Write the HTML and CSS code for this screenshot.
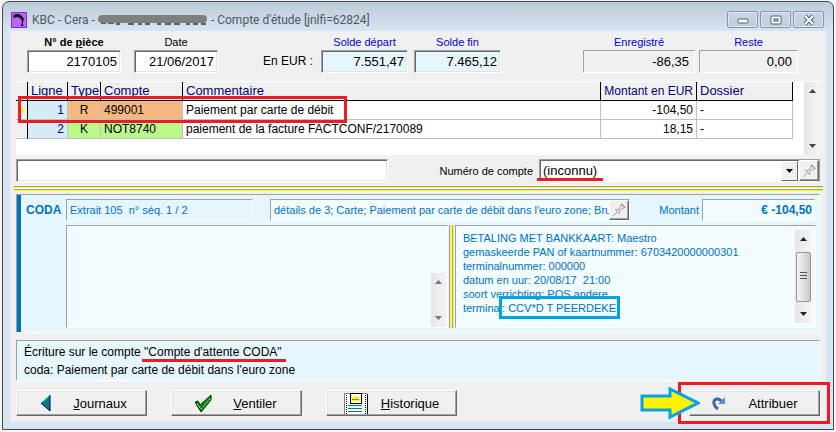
FILE: index.html
```
<!DOCTYPE html>
<html lang="fr">
<head>
    <meta charset="UTF-8">
    <meta name="viewport" content="width=device-width, initial-scale=1.0">
    <title>Compte d'étude</title>
    <link rel="stylesheet" href="styles.css">
</head>
<body>
    <div class="window">
        <header class="titlebar">
            <svg class="app-icon" width="16" height="16" viewBox="0 0 16 16">
                <rect width="16" height="16" fill="#8a2be2"/>
                <rect x="1" y="1" width="14" height="14" fill="#b768f2"/>
                <path d="M2 4l2-2h4l3 2 2 3-1 3v3l1 1h-3l1-4-1-3-3-2-4 1z" fill="#1c0a2c"/>
            </svg>
            <h1>KBC - Cera -</h1>
            <svg class="masked" width="112" height="14" viewBox="0 0 112 14">
                <path d="M4 10h5m2 0h6m2 1h4m8 0h6m4 0h4m3 0h5m7 0h4m4 0h6m3 0h6m6 0h4m3 0h5m3 0h5" stroke="#56616d" stroke-width="2"/>
                <path d="M5 6h101" stroke="#7f7f7f" stroke-width="8" stroke-linecap="round"/>
            </svg>
            <h1>- Compte d'étude [jnlfi=62824]</h1>
            <div class="window-buttons">
                <button type="button" aria-label="Réduire"><svg width="12" height="12" viewBox="0 0 12 12"><rect x="1" y="5" width="10" height="4" rx="1" fill="#fff" stroke="#56606c"/></svg></button>
                <button type="button" aria-label="Agrandir"><svg width="12" height="12" viewBox="0 0 12 12"><rect x="1" y="2" width="10" height="8" rx="1" fill="#fff" stroke="#56606c"/><rect x="4" y="5" width="4" height="2" fill="#b9c8d6" stroke="#56606c"/></svg></button>
                <button type="button" aria-label="Fermer"><svg width="12" height="12" viewBox="0 0 12 12"><path d="M2 2l8 8M10 2l-8 8" stroke="#56606c" stroke-width="4"/><path d="M2 2l8 8M10 2l-8 8" stroke="#fff" stroke-width="2"/></svg></button>
            </div>
        </header>

        <main class="content">
            <section class="summary">
                <div class="field piece">
                    <label for="piece"><b>N° de <u>p</u>ièce</b></label>
                    <input id="piece" class="sunken" value="2170105">
                </div>
                <div class="field date">
                    <label for="date">Date</label>
                    <input id="date" class="sunken" value="21/06/2017">
                </div>
                <span class="currency">En EUR :</span>
                <div class="field balance">
                    <label for="start">Solde départ</label>
                    <input id="start" class="sunken" value="7.551,47" readonly>
                </div>
                <div class="field balance">
                    <label for="end">Solde fin</label>
                    <input id="end" class="sunken" value="7.465,12" readonly>
                </div>
                <div class="field total recorded">
                    <label for="recorded">Enregistré</label>
                    <input id="recorded" class="flat" value="-86,35" readonly>
                </div>
                <div class="field total rest">
                    <label for="rest">Reste</label>
                    <input id="rest" class="flat" value="0,00" readonly>
                </div>
            </section>

            <section class="lines">
                <table>
                    <colgroup>
                        <col class="col-mark"><col class="col-line"><col class="col-type"><col class="col-account"><col><col class="col-amount"><col class="col-file">
                    </colgroup>
                    <thead>
                        <tr><th></th><th>Ligne</th><th>Type</th><th>Compte</th><th>Commentaire</th><th class="amount">Montant en EUR</th><th>Dossier</th></tr>
                    </thead>
                    <tbody>
                        <tr class="pending">
                            <td class="mark"><svg width="5" height="8" viewBox="0 0 5 8"><path d="M0 0l5 4-5 4z" fill="#ffee00"/></svg></td>
                            <td class="number">1</td><td class="type">R</td><td class="account">499001</td><td>Paiement par carte de débit</td><td class="amount">-104,50</td><td>-</td>
                        </tr>
                        <tr class="done">
                            <td class="mark"></td>
                            <td class="number">2</td><td class="type">K</td><td class="account">NOT8740</td><td>paiement de la facture FACTCONF/2170089</td><td class="amount">18,15</td><td>-</td>
                        </tr>
                    </tbody>
                </table>
                <div class="scrollbar">
                    <svg width="7" height="4" viewBox="0 0 7 4"><path d="M0 4l3.500-4L7 4z" fill="#444"/></svg>
                    <svg width="7" height="4" viewBox="0 0 7 4"><path d="M0 0h7L3.500 4z" fill="#444"/></svg>
                </div>
                <span class="callout callout-row"></span>
            </section>

            <section class="account-row">
                <input class="sunken search" aria-label="Recherche">
                <label for="account">Numéro de compte</label>
                <div class="combo">
                    <select id="account"><option>(inconnu)</option></select>
                    <span class="combo-arrow"><svg width="7" height="4" viewBox="0 0 7 4"><path d="M0 0h7L3.500 4z" fill="#000"/></svg></span>
                    <button type="button" class="pin" aria-label="Épingler"><svg width="14" height="14" viewBox="0 0 14 14"><path d="M1 13l4-4M3 6l5 5M4 7l3-1 2-3V1l4 4h-2L8 7l-1 3M9 1h1l3 3v1" fill="none" stroke="#a0a0a0"/></svg></button>
                    <span class="underline underline-account"></span>
                </div>
            </section>

            <div class="splitter"></div>

            <section class="coda">
                <div class="coda-head">
                    <h2>CODA</h2>
                    <input class="flat statement" aria-label="Extrait" value="Extrait 105  n° séq. 1 / 2" readonly>
                    <div class="details">
                        <input class="flat" aria-label="Détails" value="détails de 3; Carte; Paiement par carte de débit dans l'euro zone; Brut : x" readonly>
                        <button type="button" class="pin" aria-label="Épingler"><svg width="14" height="14" viewBox="0 0 14 14"><path d="M1 13l4-4M3 6l5 5M4 7l3-1 2-3V1l4 4h-2L8 7l-1 3M9 1h1l3 3v1" fill="none" stroke="#a0a0a0"/></svg></button>
                    </div>
                    <label for="amount">Montant</label>
                    <input id="amount" class="flat coda-amount" value="€ -104,50" readonly>
                </div>
                <div class="coda-body">
                    <div class="note note-left">
                        <textarea aria-label="Communication" readonly></textarea>
                        <div class="scrollbar">
                            <svg width="7" height="4" viewBox="0 0 7 4"><path d="M0 4l3.500-4L7 4z" fill="#777"/></svg>
                            <svg width="7" height="4" viewBox="0 0 7 4"><path d="M0 0h7L3.500 4z" fill="#777"/></svg>
                        </div>
                    </div>
                    <div class="splitter-vertical"></div>
                    <div class="note note-right">
                        <textarea aria-label="Informations" readonly>BETALING MET BANKKAART: Maestro
gemaskeerde PAN of kaartnummer: 6703420000000301
terminalnummer: 000000
datum en uur: 20/08/17  21:00
soort verrichting: POS andere
terminal: CCV*D T PEERDEKE</textarea>
                        <div class="scrollbar">
                            <svg width="7" height="4" viewBox="0 0 7 4"><path d="M0 4l3.500-4L7 4z" fill="#222"/></svg>
                            <span class="thumb"></span>
                            <svg width="7" height="4" viewBox="0 0 7 4"><path d="M0 0h7L3.500 4z" fill="#222"/></svg>
                        </div>
                        <span class="callout callout-terminal"></span>
                    </div>
                </div>
            </section>

            <section class="message">
                <p>Écriture sur le compte <span class="marked">"Compte d'attente CODA"<span class="underline underline-message"></span></span></p>
                <p>coda: Paiement par carte de débit dans l'euro zone</p>
            </section>

            <footer class="actions">
                <button type="button" class="action">
                    <svg width="30" height="22" viewBox="0 0 30 22"><path d="M17 3v16L8 11z" fill="#008080"/><path d="M8 11l9-8" stroke="#40e0e0"/><path d="M17 3v16L8 11" fill="none" stroke="#000060"/></svg>
                    <span><u>J</u>ournaux</span>
                </button>
                <button type="button" class="action">
                    <svg width="30" height="22" viewBox="0 0 30 22">
                        <path d="M8 12l3-1 3 4 9-10v3L13 20z" fill="#008000" stroke="#003800"/>
                        <path d="M7 10l3-1 2 4 11-10v3L12 17z" fill="#009000" stroke="#003800"/>
                        <path d="M9 12l4 5L23 6" fill="none" stroke="#fff" stroke-dasharray="2 1"/>
                    </svg>
                    <span><u>V</u>entiler</span>
                </button>
                <button type="button" class="action">
                    <svg width="30" height="22" viewBox="0 0 30 22" shape-rendering="crispEdges">
                        <path d="M1 1h23v21H1z" fill="#fff"/><path d="M1 22V1h23" fill="none" stroke="#808080"/>
                        <path d="M24 2v20" stroke="#000"/>
                        <path d="M3 3v19M22 3v19" stroke="#000" stroke-dasharray="1 1"/>
                        <path d="M5 13h14M5 16h14M5 19h14" stroke="#008080"/>
                        <rect x="7" y="1" width="11" height="10" fill="#fff" stroke="#000"/>
                        <path d="M9 5h2V4h2v1h4v4H9z" fill="#ff0"/><path d="M9 7h7" stroke="#888800"/>
                    </svg>
                    <span><u>H</u>istorique</span>
                </button>
                <div class="assign">
                    <button type="button" class="action">
                        <svg width="30" height="22" viewBox="0 0 30 22"><path d="M12 17C6 13 7 6 12 7l4 2" fill="none" stroke="#3966b0" stroke-width="3"/><path d="M19 5v7H12z" fill="#5d8ed0"/></svg>
                        <span>Attribuer</span>
                    </button>
                    <span class="callout callout-assign"></span>
                    <svg class="pointer" width="60" height="34" viewBox="0 0 60 34"><path d="M2 10h28V3l28 14-28 14v-7H2z" fill="#fff200" stroke="#00a2e8" stroke-width="3"/></svg>
                </div>
            </footer>
        </main>
    </div>
</body>
</html>
```
FILE: styles.css
```
* {
    box-sizing: border-box;
}
body {
    margin: 0;
    padding: 1px 2px 2px;
    background: #f4f4f4;
    color: #000;
    font-family: "Liberation Sans", Arial, sans-serif;
    font-size: 12px;
}
h1, h2, p {
    margin: 0;
}
svg {
    display: block;
    flex: none;
}
input, button, select, textarea {
    font: inherit;
    color: inherit;
    border-radius: 0;
    margin: 0;
}
.window {
    padding: 0 7px 7px;
    border: 1px solid #45484c;
    border-radius: 7px 7px 0 0;
    background: linear-gradient(#bccbd9, #d7e4f2 29px);
}

/* title bar */
.titlebar {
    display: flex;
    align-items: center;
    height: 29px;
    padding: 6px 0 0 1px;
}
.titlebar h1 {
    font: 12px Roboto, "Noto Sans", sans-serif;
    line-height: 20px;
    color: #4c5763;
    white-space: nowrap;
}
.app-icon {
    margin-right: 5px;
}
.masked {
    margin: 0 2px;
}
.window-buttons {
    display: flex;
    gap: 2px;
    margin-left: auto;
    margin-right: 2px;
}
.window-buttons button {
    display: flex;
    align-items: center;
    justify-content: center;
    width: 31px;
    height: 17px;
    padding: 0;
    border: 1px solid #8496aa;
    border-radius: 2px;
    background: linear-gradient(#c8d6e4, #bdcddd);
    box-shadow: inset 0 0 0 1px #dce7f1;
}

.content {
    padding: 0 6px 6px;
    background: #f0f0f0;
}

/* inset boxes */
.sunken {
    border: 1px solid;
    border-color: #a0a0a0 #fff #fff #a0a0a0;
    background: #fff;
    box-shadow: inset 1px 1px 0 #696969, inset -1px -1px 0 #e3e3e3;
}
.flat {
    border: 1px solid;
    border-color: #a0a0a0 #fff #fff #a0a0a0;
    background: #f0f0f0;
}

/* summary */
.summary {
    display: flex;
    align-items: flex-end;
    padding: 3px 22px 8px 11px;
}
.field {
    display: flex;
    flex-direction: column;
}
.field label {
    font-size: 11px;
    line-height: 16px;
    text-align: center;
}
.field input {
    width: 100%;
    height: 23px;
    padding: 0 3px;
    font-size: 13px;
    text-align: right;
}
.piece {
    width: 94px;
}
.date {
    width: 84px;
    margin-left: 13px;
}
.currency {
    margin: 0 8px 0 45px;
    line-height: 23px;
}
.balance {
    width: 87px;
    margin-right: 6px;
}
.balance label, .total label {
    color: #0000e0;
}
.balance input {
    background: #e5f6ff;
}
.total input {
    padding: 0 5px;
}
.recorded {
    width: 112px;
    margin-left: auto;
}
.rest {
    width: 99px;
    margin-left: 4px;
}

/* entry lines */
.lines {
    position: relative;
    display: flex;
    min-height: 74px;
    border-top: 1px solid #fff;
    background: #fff;
}
.lines table {
    flex: 1;
    align-self: flex-start;
    width: 100%;
    margin-right: 11px;
    border-collapse: separate;
    border-spacing: 0;
    table-layout: fixed;
}
.col-mark {
    width: 12px;
}
.col-line {
    width: 40px;
}
.col-type {
    width: 33px;
}
.col-account {
    width: 82px;
}
.col-amount, .col-file {
    width: 96px;
}
.lines th {
    height: 19px;
    padding: 0 3px;
    border-right: 1px solid #000;
    border-bottom: 1px solid #000;
    background: #f0f0f0;
    color: #000080;
    font-size: 13px;
    font-weight: normal;
    line-height: 18px;
    text-align: left;
    vertical-align: baseline;
    white-space: nowrap;
}
.lines td {
    height: 19px;
    padding: 0 3px;
    border-right: 1px solid #c0c0c0;
    border-bottom: 1px solid #c0c0c0;
    line-height: 18px;
    white-space: nowrap;
}
.lines .mark {
    padding: 0 0 0 4px;
    border-right-color: #000;
    background: #f0f0f0;
}
.lines .number {
    background: #d5ebf7;
    color: #000080;
    text-align: right;
}
.lines .type {
    text-align: center;
}
.lines .amount {
    font-size: 12px;
    text-align: right;
}
.pending .type, .pending .account {
    background: #f4b880;
}
.done .type, .done .account {
    background: #b9f98a;
}
.scrollbar {
    display: flex;
    flex-direction: column;
    align-items: center;
    justify-content: space-between;
    flex: none;
    width: 16px;
    padding: 7px 0;
    background: linear-gradient(90deg, #e6e6e6, #f4f4f4);
}

/* account choice */
.account-row {
    display: flex;
    align-items: center;
    padding: 4px 0;
}
.search {
    width: 372px;
    height: 23px;
}
.account-row label {
    margin-left: auto;
    padding-right: 6px;
    font-size: 11px;
}
.combo {
    position: relative;
    display: flex;
    width: 281px;
    height: 23px;
    border: 1px solid #a0a0a0;
    border-bottom-color: #fff;
    background: #fff;
    box-shadow: inset 1px 1px 0 #696969;
}
.combo select {
    flex: 1;
    padding: 0 3px;
    border: 0;
    background: transparent;
    font-size: 13px;
    appearance: none;
}
.combo-arrow, .pin {
    display: flex;
    align-items: center;
    justify-content: center;
    border: 1px solid;
    border-color: #fff #696969 #696969 #fff;
    background: #f0f0f0;
    padding: 0;
}
.combo-arrow {
    width: 17px;
    margin: 1px 1px 0 0;
    pointer-events: none;
}
.pin {
    width: 20px;
    box-shadow: inset -1px -1px 0 #a0a0a0;
}

/* splitters */
.splitter {
    height: 5px;
    margin: 0 -3px 3px -2px;
    background: linear-gradient(#a0a0a0 1px, #ff0 1px 2px, #fff 2px 3px, #a0a0a0 3px 4px, #ff0 4px);
}
.splitter-vertical {
    width: 5px;
    margin: 0 1px;
    background: linear-gradient(90deg, #a0a0a0 1px, #ff0 1px 2px, #fff 2px 3px, #a0a0a0 3px 4px, #ff0 4px);
}

/* CODA panel */
.coda {
    padding: 4px 3px 4px 5px;
    border: 1px solid;
    border-color: #a0a0a0 #fff #fff #a0a0a0;
    background: linear-gradient(90deg, #0072c6 4px, #e5f6ff 4px);
    color: #0072c6;
}
.coda-head {
    display: flex;
    align-items: center;
    height: 22px;
    margin-bottom: 4px;
    font-size: 11px;
}
.coda-head input {
    height: 22px;
    padding: 0 3px;
}
.coda h2 {
    width: 44px;
    padding-left: 4px;
    font-size: 12px;
}
.coda-head .statement {
    width: 187px;
    background: #e5f6ff;
}
.details {
    position: relative;
    flex: 1;
    margin: 0 29px 0 17px;
}
.details input {
    width: 100%;
    background: #f2fcff;
}
.details .pin {
    position: absolute;
    top: 1px;
    right: 1px;
    height: 20px;
}
.coda-head .coda-amount {
    width: 113px;
    margin: 0 1px 0 3px;
    padding: 0 2px;
    background: #f2fcff;
    font-size: 12px;
    font-weight: bold;
    text-align: right;
}
.coda-body {
    display: flex;
    height: 103px;
    padding-left: 44px;
}
.note {
    position: relative;
    display: flex;
    border: 1px solid;
    border-color: #a0a0a0 #fff #fff #a0a0a0;
    background: #f2fcff;
}
.note-left {
    flex: 382;
}
.note-right {
    flex: 361;
}
.note textarea {
    flex: 1;
    min-width: 0;
    padding: 5px 0 0 7px;
    border: 0;
    background: transparent;
    font-size: 11px;
    line-height: 14px;
    resize: none;
    overflow: hidden;
}
.note-left .scrollbar {
    align-self: flex-end;
    height: 54px;
}
.note-right .scrollbar {
    margin: 4px 4px 4px 0;
}
.thumb {
    width: 15px;
    height: 50px;
    border: 1px solid #979797;
    border-radius: 2px;
    background:
        repeating-linear-gradient(#555 0 1px, transparent 1px 3px) center / 7px 9px no-repeat,
        linear-gradient(90deg, #f5f5f5, #c9c9c9);
}

/* message */
.message {
    margin-top: 7px;
    padding: 2px 7px 1px;
    border: 1px solid;
    border-color: #a0a0a0 #fff #fff #a0a0a0;
    background: #e5f6ff;
    line-height: 18px;
}
.marked {
    position: relative;
}

/* buttons */
.actions {
    display: flex;
    gap: 24px;
    padding-top: 9px;
}
.action {
    display: flex;
    align-items: center;
    width: 131px;
    height: 26px;
    padding: 0 0 0 16px;
    border: 1px solid;
    border-color: #fff #696969 #696969 #fff;
    background: #f0f0f0;
    box-shadow: inset -1px -1px 0 #a0a0a0, inset 1px 1px 0 #e3e3e3;
}
.action span {
    flex: 1;
    padding-right: 9px;
    font-size: 13px;
    text-align: center;
}
.assign {
    position: relative;
    margin-left: auto;
}

/* highlights drawn over the window */
.callout {
    position: absolute;
    border: 3px solid #ed1c24;
    pointer-events: none;
}
.callout-row {
    top: 14px;
    left: 2px;
    width: 329px;
    height: 27px;
}
.callout-terminal {
    top: 70px;
    left: 43px;
    width: 121px;
    height: 23px;
    border-color: #00a2e8;
}
.callout-assign {
    top: -8px;
    right: -10px;
    width: 152px;
    height: 42px;
}
.pointer {
    position: absolute;
    top: -4px;
    left: -49px;
}
.underline {
    position: absolute;
    height: 3px;
    background: #ed1c24;
}
.underline-account {
    left: -3px;
    bottom: 0;
    width: 66px;
}
.underline-message {
    left: -2px;
    right: -4px;
    bottom: -3px;
}
```
